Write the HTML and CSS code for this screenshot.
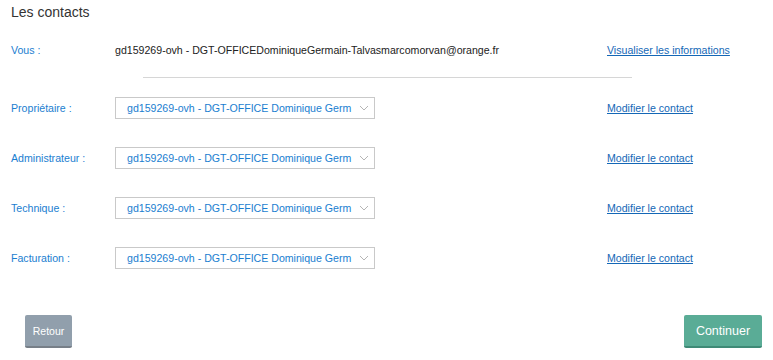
FILE: index.html
```html
<!DOCTYPE html>
<html lang="fr">
<head>
    <meta charset="UTF-8">
    <title>Les contacts</title>
    <link rel="stylesheet" href="styles.css">
</head>
<body>
    <div class="container">
        <h2>Les contacts</h2>
        <div class="row you">
            <span class="label">Vous :</span>
            <span class="value">gd159269-ovh - DGT-OFFICEDominiqueGermain-Talvasmarcomorvan@orange.fr</span>
            <a href="#" class="action">Visualiser les informations</a>
        </div>
        <hr>
        <div class="row">
            <label class="label">Propriétaire :</label>
            <div class="select"><span>gd159269-ovh - DGT-OFFICE Dominique Germ</span><svg viewBox="0 0 10 6"><path d="M1 1l4 4 4-4"/></svg></div>
            <a href="#" class="action">Modifier le contact</a>
        </div>
        <div class="row">
            <label class="label">Administrateur :</label>
            <div class="select"><span>gd159269-ovh - DGT-OFFICE Dominique Germ</span><svg viewBox="0 0 10 6"><path d="M1 1l4 4 4-4"/></svg></div>
            <a href="#" class="action">Modifier le contact</a>
        </div>
        <div class="row">
            <label class="label">Technique :</label>
            <div class="select"><span>gd159269-ovh - DGT-OFFICE Dominique Germ</span><svg viewBox="0 0 10 6"><path d="M1 1l4 4 4-4"/></svg></div>
            <a href="#" class="action">Modifier le contact</a>
        </div>
        <div class="row">
            <label class="label">Facturation :</label>
            <div class="select"><span>gd159269-ovh - DGT-OFFICE Dominique Germ</span><svg viewBox="0 0 10 6"><path d="M1 1l4 4 4-4"/></svg></div>
            <a href="#" class="action">Modifier le contact</a>
        </div>
        <div class="buttons">
            <button class="btn back">Retour</button>
            <button class="btn next">Continuer</button>
        </div>
    </div>
</body>
</html>
```

FILE: styles.css
```css
body {
    margin: 0;
    font-family: "Liberation Sans", Arial, sans-serif;
    background: #fff;
    color: #333;
}
.container {
    padding: 2px 11px 0 11px;
}
h2 {
    margin: 0;
    font-size: 14px;
    font-weight: normal;
    color: #333;
    line-height: 20px;
}
.row {
    display: grid;
    grid-template-columns: 104px 492px auto;
    align-items: center;
    height: 22px;
    margin-bottom: 28px;
    font-size: 10.6px;
}
.row.you {
    margin-top: 17px;
    margin-bottom: 0;
}
.label {
    color: #1a7ed0;
}
.value {
    color: #222;
    white-space: nowrap;
}
.action {
    color: #1467b6;
    text-decoration: underline;
}
hr {
    border: 0;
    border-top: 1px solid #d6d6d6;
    width: 489px;
    margin: 16px 0 19px 132px;
}
.select {
    width: 260px;
    height: 22px;
    box-sizing: border-box;
    border: 1px solid #c9c9c9;
    display: flex;
    align-items: center;
    padding: 0 5px 0 11px;
    gap: 12px;
}
.select span {
    flex: 1;
    min-width: 0;
    white-space: nowrap;
    color: #1a7ed0;
    font-size: 10.6px;
}
.select svg {
    flex-shrink: 0;
    width: 10px;
    height: 6px;
    fill: none;
    stroke: #b5b5b5;
    stroke-width: 1;
}
.buttons {
    display: flex;
    justify-content: space-between;
    padding: 18px 0 0 14px;
}
.btn {
    border: 0;
    border-radius: 2px;
    color: #fff;
    font-family: "Liberation Sans", Arial, sans-serif;
    height: 33px;
    cursor: pointer;
}
.back {
    width: 47px;
    background: #919fac;
    border-bottom: 2px solid #777f88;
    font-size: 10.5px;
}
.next {
    width: 78px;
    background: #5aac96;
    border-bottom: 2px solid #3e8a76;
    font-size: 12.5px;
}
```
